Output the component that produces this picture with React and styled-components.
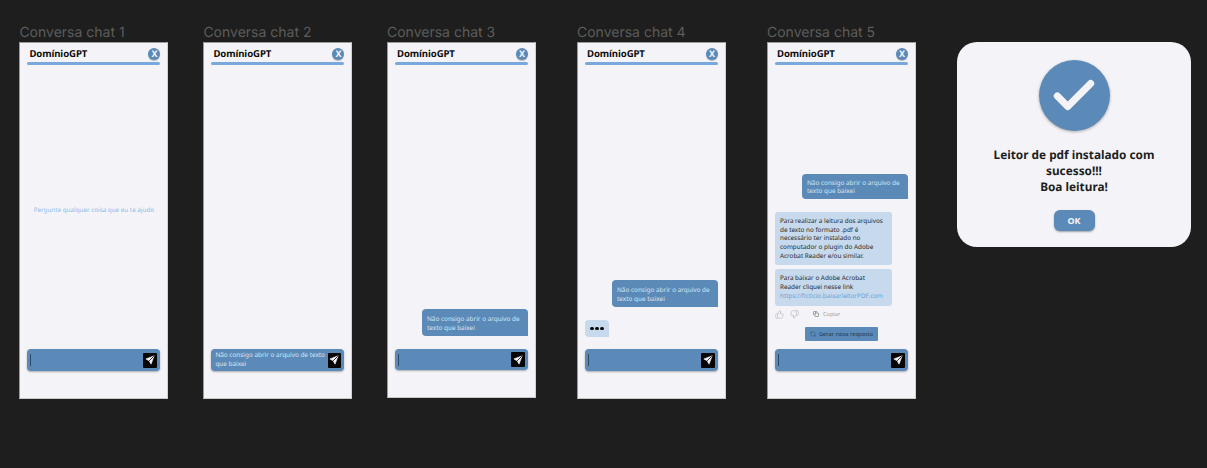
import React from "react";
import styled, { createGlobalStyle } from "styled-components";
import { ThumbsUp, ThumbsDown, Copy, RefreshCcw, Check } from "lucide-react";

const blue = "#5b8ab8";
const lightBlue = "#c6d9ed";
const lineBlue = "#79a9dc";

const GlobalStyle = createGlobalStyle`
  html, body {
    margin: 0;
    padding: 0;
    background: #1e1e1e;
  }
  body {
    font-family: "Noto Sans", sans-serif;
    text-rendering: geometricPrecision;
  }
`;

const Canvas = styled.div`
  position: relative;
  width: 1207px;
  height: 468px;
  overflow: hidden;
  background: #1e1e1e;
`;

/* quadros soltos no canvas do figma */
const FrameSlot = styled.section`
  position: absolute;
  left: ${(p) => p.$x}px;
  top: 24px;
  width: 149px;
`;

const FrameLabel = styled.div`
  height: 18px;
  line-height: 18px;
  font-family: Inter, sans-serif;
  font-size: 14px;
  color: #5c5c5c;
  white-space: nowrap;
`;

const Phone = styled.div`
  box-sizing: border-box;
  display: flex;
  flex-direction: column;
  width: 149px;
  height: ${(p) => p.$height || 357}px;
  padding: 0 7px 27px 7px;
  background: #f4f4f8;
  border: 1px solid #9a9a9a;
  border-right-color: #d0d0d0;
  border-bottom-color: #c8c8c8;
`;

const Header = styled.header`
  display: flex;
  flex-direction: column;
  flex: none;
`;

const HeaderRow = styled.div`
  display: flex;
  align-items: center;
  justify-content: space-between;
  height: 19px;
  padding: 2px 0 0 2px;
  box-sizing: border-box;
`;

const Brand = styled.span`
  font-size: 9.6px;
  font-weight: 700;
  letter-spacing: -0.1px;
  color: #0c0c0c;
`;

const CloseButton = styled.span`
  display: flex;
  align-items: center;
  justify-content: center;
  width: 12px;
  height: 12px;
  border-radius: 50%;
  background: ${blue};
  box-shadow: 0 1px 1px rgba(0, 0, 0, 0.25);
  color: #f4f4f8;
  font-size: 9px;
  font-weight: 700;
  line-height: 1;
`;

const HeaderLine = styled.div`
  height: 3px;
  border-radius: 2px;
  background: ${lineBlue};
`;

const Body = styled.div`
  flex: 1;
  min-height: 0;
  display: flex;
  flex-direction: column;
  justify-content: ${(p) => (p.$center ? "center" : "flex-end")};
  align-items: stretch;
  gap: 13px;
  padding-bottom: ${(p) => p.$bottom ?? 13}px;
`;

const Hint = styled.p`
  margin: 0;
  padding-top: 13px;
  text-align: center;
  font-size: 6.3px;
  color: #8dbbe8;
  white-space: nowrap;
`;

const UserBubble = styled.div`
  box-sizing: border-box;
  align-self: flex-end;
  width: 106px;
  height: ${(p) => p.$height || 27}px;
  padding: 5px 5px 0;
  background: ${blue};
  border-radius: 4px 4px 0 4px;
  font-size: 6.4px;
  line-height: ${(p) => (p.$height ? 8 : 9)}px;
  color: #d5e3f1;
`;

const TypingBubble = styled.div`
  display: flex;
  align-items: center;
  justify-content: center;
  gap: 1.6px;
  width: 24px;
  height: 17px;
  background: ${lightBlue};
  border-radius: 4px 4px 0 4px;
`;

const Dot = styled.span`
  width: 3.6px;
  height: 3.6px;
  border-radius: 50%;
  background: #0c0c0c;
`;

const AnswerStack = styled.div`
  display: flex;
  flex-direction: column;
  gap: 4px;
`;

const AnswerBubble = styled.div`
  box-sizing: border-box;
  width: 117px;
  padding: 5px;
  background: ${lightBlue};
  border-radius: 3px;
  font-size: 6.35px;
  line-height: 8.7px;
  color: #2a2a2a;
`;

const FakeLink = styled.span`
  color: #6e9fd2;
`;

const Actions = styled.div`
  display: flex;
  align-items: center;
  gap: 6px;
  height: 12px;
  margin-top: -1.5px;
  color: #999;
`;

const CopyAction = styled.span`
  display: flex;
  align-items: center;
  gap: 4px;
  margin-left: 8px;
  font-size: 5.6px;
  color: #a0a0a0;
`;

const RegenerateButton = styled.div`
  display: flex;
  align-items: center;
  justify-content: center;
  gap: 3px;
  align-self: center;
  width: 73px;
  height: 14px;
  margin-top: 3px;
  background: ${blue};
  border-radius: 1px;
  font-size: 5.7px;
  color: #20354b;
  white-space: nowrap;
`;

const Composer = styled.div`
  box-sizing: border-box;
  flex: none;
  display: flex;
  align-items: center;
  justify-content: space-between;
  height: ${(p) => p.$height || 22}px;
  padding: 0 3px;
  background: ${blue};
  border-radius: 4px;
  box-shadow: 0 1px 2px rgba(0, 0, 0, 0.3);
`;

const Caret = styled.span`
  width: 1px;
  height: 12px;
  background: #2c4a68;
`;

const ComposerText = styled.span`
  width: 113px;
  margin-left: 1px;
  font-size: 6.4px;
  line-height: 8.7px;
  color: #d5e3f1;
`;

const SendButton = styled.span`
  display: flex;
  align-items: center;
  justify-content: center;
  width: 14px;
  height: 15px;
  background: #050505;
  border-radius: 1px;
`;

const Dialog = styled.section`
  box-sizing: border-box;
  position: absolute;
  left: 957px;
  top: 42px;
  width: 234px;
  height: 205px;
  display: flex;
  flex-direction: column;
  align-items: center;
  padding-top: 18px;
  background: #f4f4f8;
  border-radius: 20px;
`;

const CheckCircle = styled.div`
  display: flex;
  align-items: center;
  justify-content: center;
  width: 71px;
  height: 71px;
  border-radius: 50%;
  background: ${blue};
  box-shadow: 0 1px 3px rgba(0, 0, 0, 0.3);
  color: #f4f4f8;
`;

const DialogText = styled.p`
  margin: 16px 0 0;
  text-align: center;
  font-size: 11.8px;
  font-weight: 700;
  line-height: 16px;
  color: #1e1e1e;
`;

const OkButton = styled.button`
  width: 41px;
  height: 21px;
  margin-top: 15px;
  padding: 0;
  border: 0;
  border-radius: 6px;
  background: ${blue};
  box-shadow: 0 1px 2px rgba(0, 0, 0, 0.35);
  font-family: inherit;
  font-size: 9px;
  font-weight: 700;
  color: #f4f4f8;
`;

const question = "Não consigo abrir o arquivo de texto que baixei";

// aviaozinho do botao de enviar
const PlaneIcon = () => (
  <svg width="10" height="10" viewBox="0 0 24 24">
    <path d="M22 2 2 9.5l8 4.5 4.5 8z" fill="#f4f4f8" stroke="#f4f4f8" strokeWidth="1.5" strokeLinejoin="round" />
    <path d="M21 3 10 14" stroke="#050505" strokeWidth="2" />
  </svg>
);

const InputBar = ({ text, height }) => (
  <Composer $height={height}>
    {text ? <ComposerText>{text}</ComposerText> : <Caret />}
    <SendButton>
      <PlaneIcon />
    </SendButton>
  </Composer>
);

const ChatFrame = ({ x, label, height, center, bottom, input, inputHeight, children }) => (
  <FrameSlot $x={x}>
    <FrameLabel>{label}</FrameLabel>
    <Phone $height={height}>
      <Header>
        <HeaderRow>
          <Brand>DomínioGPT</Brand>
          <CloseButton>X</CloseButton>
        </HeaderRow>
        <HeaderLine />
      </Header>
      <Body $center={center} $bottom={bottom}>
        {children}
      </Body>
      <InputBar text={input} height={inputHeight} />
    </Phone>
  </FrameSlot>
);

export default function App() {
  return (
    <Canvas>
      <GlobalStyle />
      <ChatFrame x={19.4} label="Conversa chat 1" center bottom={8}>
        <Hint>Pergunte qualquer coisa que eu te ajudo</Hint>
      </ChatFrame>

      <ChatFrame x={203.4} label="Conversa chat 2" input={question} />

      <ChatFrame x={387} label="Conversa chat 3" height={356} inputHeight={21}>
        <UserBubble>{question}</UserBubble>
      </ChatFrame>

      <ChatFrame x={577} label="Conversa chat 4" bottom={12}>
        <UserBubble>{question}</UserBubble>
        <TypingBubble>
          <Dot />
          <Dot />
          <Dot />
        </TypingBubble>
      </ChatFrame>

      <ChatFrame x={767} label="Conversa chat 5" bottom={8}>
        <UserBubble $height={25}>{question}</UserBubble>
        <AnswerStack>
          <AnswerBubble>
            Para realizar a leitura dos arquivos de texto no formato .pdf é
            necessário ter instalado no computador o plugin do Adobe Acrobat
            Reader e/ou similar.
          </AnswerBubble>
          <AnswerBubble>
            Para baixar o Adobe Acrobat Reader cliquei nesse link{" "}
            <FakeLink>https://ficticio.baixarleitorPDF.com</FakeLink>
          </AnswerBubble>
          <Actions>
            <ThumbsUp size={9} strokeWidth={1} />
            <ThumbsDown size={9} strokeWidth={1} />
            <CopyAction>
              <Copy size={6} strokeWidth={1.8} color="#444" />
              Copiar
            </CopyAction>
          </Actions>
          <RegenerateButton>
            <RefreshCcw size={6} strokeWidth={1.2} />
            Gerar nova resposta
          </RegenerateButton>
        </AnswerStack>
      </ChatFrame>

      <Dialog>
        <CheckCircle>
          <Check size={50} strokeWidth={3.4} />
        </CheckCircle>
        <DialogText>
          Leitor de pdf instalado com
          <br />
          sucesso!!!
          <br />
          Boa leitura!
        </DialogText>
        <OkButton>OK</OkButton>
      </Dialog>
    </Canvas>
  );
}
